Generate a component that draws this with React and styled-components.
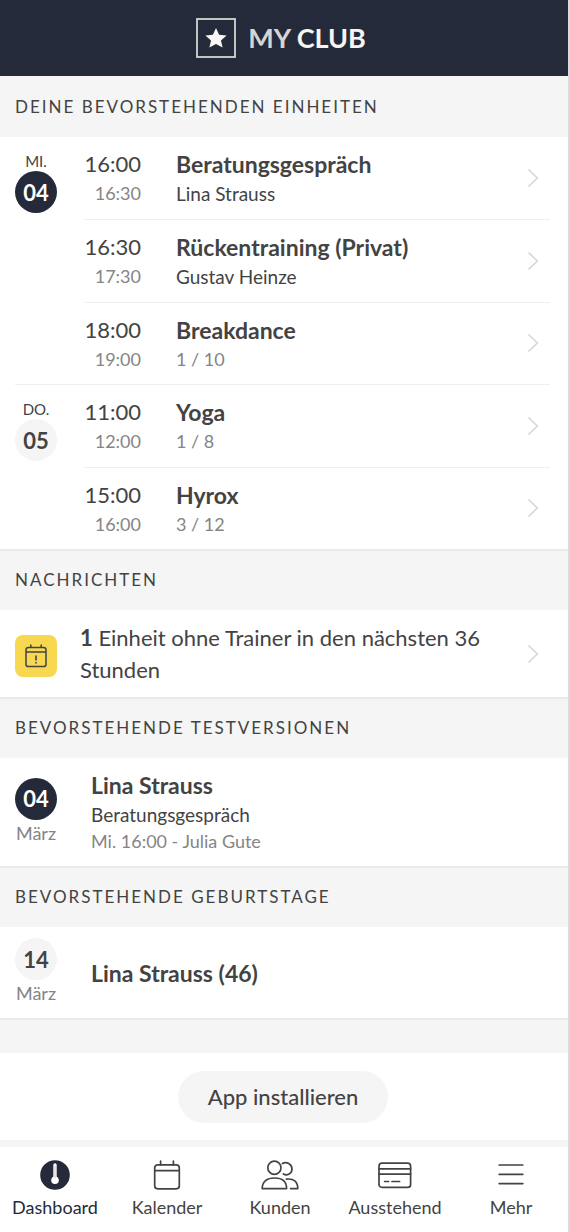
import React from 'react';
import styled, { createGlobalStyle } from 'styled-components';

const navy = '#242a3a';
const ink = '#434343';
const muted = '#858585';
const soft = '#f5f5f5';
const line = '#efefef';
const edge = '#e9e9e9';

const days = [
  {
    day: 'MI.',
    date: '04',
    today: true,
    units: [
      { start: '16:00', end: '16:30', title: 'Beratungsgespräch', person: 'Lina Strauss' },
      { start: '16:30', end: '17:30', title: 'Rückentraining (Privat)', person: 'Gustav Heinze' },
      { start: '18:00', end: '19:00', title: 'Breakdance', places: '1 / 10' },
    ],
  },
  {
    day: 'DO.',
    date: '05',
    units: [
      { start: '11:00', end: '12:00', title: 'Yoga', places: '1 / 8' },
      { start: '15:00', end: '16:00', title: 'Hyrox', places: '3 / 12' },
    ],
  },
];

const Chevron = () => (
  <ChevronIcon viewBox="0 0 12 20" aria-hidden="true">
    <path d="M1.5 1.5 L10.3 10 L1.5 18.5" />
  </ChevronIcon>
);

const DashboardIcon = () => (
  <NavIcon width="30" height="30" viewBox="0 0 30 30" aria-hidden="true">
    <circle cx="15" cy="15" r="14.8" fill={navy} stroke="none" />
    <path d="M15 5 V20" stroke="#fff" strokeWidth="3.4" />
    <circle cx="15" cy="20.2" r="3.8" fill="#fff" stroke="none" />
    <path d="M15 6 V18" stroke="#c9cbd0" strokeWidth="1" />
  </NavIcon>
);

const CalendarIcon = () => (
  <NavIcon width="28" height="30" viewBox="0 0 28 30" aria-hidden="true">
    <rect x="1.7" y="4.8" width="24.6" height="24" rx="3" />
    <path d="M1.7 10.6 H26.3 M7.6 1 V4.8 M20.4 1 V4.8" />
  </NavIcon>
);

const PeopleIcon = () => (
  <NavIcon width="38" height="30" viewBox="0 0 38 30" aria-hidden="true">
    <circle cx="13.4" cy="7.8" r="6.6" />
    <path d="M1.2 28.6 C1.2 21.5 6 18 13.4 18 C20.8 18 25.6 21.5 25.6 28.6 Z" />
    <path d="M21.4 3.6 C25.5 1.2 31 4 31 9 C31 13.6 26 16.2 22.4 14" />
    <path d="M25.4 19.2 C32.5 18 36.8 22 36.8 28.6 H29.6" />
  </NavIcon>
);

const CardIcon = () => (
  <NavIcon width="34" height="30" viewBox="0 0 34 30" aria-hidden="true">
    <rect x="1" y="3.2" width="31.6" height="24.2" rx="3" />
    <path d="M1 8.9 H32.6 M1 14.2 H32.6 M6.6 21.5 H10.6 M14 21.5 H21.6" />
  </NavIcon>
);

const MenuIcon = () => (
  <NavIcon width="26" height="30" viewBox="0 0 26 30" aria-hidden="true">
    <path d="M1.2 5 H24.8 M1.2 14.3 H24.8 M1.2 23.6 H24.8" />
  </NavIcon>
);

const navItems = [
  { label: 'Dashboard', icon: <DashboardIcon />, active: true },
  { label: 'Kalender', icon: <CalendarIcon /> },
  { label: 'Kunden', icon: <PeopleIcon /> },
  { label: 'Ausstehend', icon: <CardIcon /> },
  { label: 'Mehr', icon: <MenuIcon /> },
];

const App = () => {
  return (
    <>
      <GlobalStyle />
      <Page>
        <Header>
          <LogoIcon viewBox="0 0 40 40" aria-hidden="true">
            <rect x="1" y="1" width="38" height="38" fill="none" stroke="#d5d5d0" strokeWidth="1.8" />
            <path
              d="M20 10 L23.1 16.8 L30.6 17.5 L25 22.5 L26.6 29.6 L20 25.9 L13.4 29.6 L15 22.5 L9.4 17.5 L16.9 16.8 Z"
              fill="#f7f7f5"
            />
          </LogoIcon>
          <LogoText>
            <span>MY</span> CLUB
          </LogoText>
        </Header>

        <main>
          <SectionTitle>Deine bevorstehenden Einheiten</SectionTitle>
          {days.map((group) => (
            <DayGroup key={group.date}>
              <DayColumn>
                <DayName>{group.day}</DayName>
                <DateCircle $active={group.today}>{group.date}</DateCircle>
              </DayColumn>
              <UnitList>
                {group.units.map((unit) => (
                  <UnitRow key={unit.start} href="#einheit">
                    <Times>
                      <StartTime>{unit.start}</StartTime>
                      <EndTime>{unit.end}</EndTime>
                    </Times>
                    <UnitInfo>
                      <Title>{unit.title}</Title>
                      <SubText $muted={!unit.person}>{unit.person || unit.places}</SubText>
                    </UnitInfo>
                    <Chevron />
                  </UnitRow>
                ))}
              </UnitList>
            </DayGroup>
          ))}

          <SectionTitle>Nachrichten</SectionTitle>
          <MessageRow href="#nachrichten">
            <MessageBadge>
              <svg width="22" height="24" viewBox="0 0 22 24" fill="none" stroke={ink} strokeWidth="1.5" aria-hidden="true">
                <rect x="1" y="3.6" width="20" height="19" rx="2.4" />
                <path d="M1 8 H21 M5.8 0.6 V3.6 M16.2 0.6 V3.6" />
                <path d="M11 11.4 V16.4 M11 18 V19.6" strokeWidth="1.6" />
              </svg>
            </MessageBadge>
            <MessageText>
              <b>1</b> Einheit ohne Trainer in den nächsten 36 Stunden
            </MessageText>
            <Chevron />
          </MessageRow>

          <SectionTitle>Bevorstehende Testversionen</SectionTitle>
          <PersonRow $height={108}>
            <DateColumn>
              <DateCircle $active>04</DateCircle>
              <Month>März</Month>
            </DateColumn>
            <div>
              <Title>Lina Strauss</Title>
              <SubText>Beratungsgespräch</SubText>
              <SubText $muted>Mi. 16:00 - Julia Gute</SubText>
            </div>
          </PersonRow>

          <SectionTitle>Bevorstehende Geburtstage</SectionTitle>
          <PersonRow $height={91}>
            <DateColumn>
              <DateCircle>14</DateCircle>
              <Month>März</Month>
            </DateColumn>
            <Title>Lina Strauss (46)</Title>
          </PersonRow>

          <Gap />
          <InstallBar>
            <InstallButton type="button">App installieren</InstallButton>
          </InstallBar>
        </main>

        <Nav>
          {navItems.map((item) => (
            <NavLink key={item.label} href={`#${item.label.toLowerCase()}`} $active={item.active}>
              {item.icon}
              {item.label}
            </NavLink>
          ))}
        </Nav>
      </Page>
    </>
  );
};

const GlobalStyle = createGlobalStyle`
  * {
    box-sizing: border-box;
  }

  body {
    margin: 0;
    background: #fff;
    color: ${ink};
    font-family: Lato, 'Noto Sans', sans-serif;
    font-size: 18px;
  }

  a {
    color: inherit;
    text-decoration: none;
  }
`;

const Page = styled.div`
  border-right: 2px solid #dcdcdc;
`;

const Header = styled.header`
  display: flex;
  align-items: center;
  justify-content: center;
  gap: 12px;
  height: 76px;
  padding-right: 6px;
  background: ${navy};
`;

const LogoIcon = styled.svg`
  width: 40px;
  height: 40px;
`;

const LogoText = styled.span`
  color: #f5f5f3;
  font-size: 27px;
  font-weight: 700;
  line-height: 32px;

  span {
    color: #d5d5d3;
  }
`;

const SectionTitle = styled.h2`
  height: 61px;
  margin: 0;
  padding: 0 15px;
  border-top: 2px solid ${edge};
  background: ${soft};
  font-size: 17px;
  font-weight: 400;
  letter-spacing: 2px;
  line-height: 58px;
  text-transform: uppercase;

  &:first-child {
    border-top-color: ${soft};
  }
`;

const DayGroup = styled.section`
  display: flex;
  margin: 0 18px 0 15px;
  border-bottom: 1px solid ${line};

  &:last-of-type {
    border-bottom: 0;
  }
`;

const DayColumn = styled.div`
  display: flex;
  flex-direction: column;
  align-items: center;
  width: 42px;
  margin-right: 28px;
  padding-top: 14px;
`;

const DayName = styled.span`
  font-size: 15px;
  line-height: 20px;
`;

const DateCircle = styled.span`
  display: flex;
  align-items: center;
  justify-content: center;
  width: 42px;
  height: 42px;
  border-radius: 50%;
  background: ${({ $active }) => ($active ? navy : soft)};
  color: ${({ $active }) => ($active ? '#fff' : ink)};
  font-size: 22px;
  font-weight: 700;
`;

const UnitList = styled.div`
  flex: 1;
`;

const UnitRow = styled.a`
  display: flex;
  height: 83px;
  padding: 11px 11px 12px 0;
  border-bottom: 1px solid ${line};

  &:last-child {
    height: 81px;
    border-bottom: 0;
  }
`;

const Times = styled.div`
  display: flex;
  flex-direction: column;
  align-items: flex-end;
  width: 56px;
  margin-right: 35px;
`;

const StartTime = styled.span`
  font-size: 22px;
  line-height: 32px;
`;

const EndTime = styled.span`
  color: ${muted};
  font-size: 18px;
  line-height: 27px;
`;

const UnitInfo = styled.div`
  flex: 1;
`;

const Title = styled.div`
  font-size: 23px;
  font-weight: 700;
  line-height: 32px;
`;

const SubText = styled.div`
  color: ${({ $muted }) => ($muted ? muted : ink)};
  font-size: ${({ $muted }) => ($muted ? 18 : 19)}px;
  line-height: 27px;
`;

const ChevronIcon = styled.svg`
  flex: none;
  align-self: center;
  width: 12px;
  height: 20px;
  fill: none;
  stroke: #d6d6d6;
  stroke-width: 1.6;
`;

const MessageRow = styled.a`
  display: flex;
  align-items: center;
  min-height: 87px;
  padding: 12px 29px 11px 15px;
`;

const MessageBadge = styled.span`
  display: flex;
  align-items: center;
  justify-content: center;
  width: 42px;
  height: 42px;
  margin: 4px 23px 0 0;
  border-radius: 8px;
  background: #f7d850;
`;

const MessageText = styled.p`
  flex: 1;
  margin: 0;
  padding-right: 40px;
  font-size: 22px;
  line-height: 32px;
`;

const PersonRow = styled.div`
  display: flex;
  align-items: center;
  gap: 34px;
  min-height: ${({ $height }) => $height}px;
  padding: 0 15px;
`;

const DateColumn = styled.div`
  display: flex;
  flex-direction: column;
  align-items: center;
  width: 42px;
`;

const Month = styled.span`
  color: ${muted};
  font-size: 18px;
  line-height: 27px;
`;

const Gap = styled.div`
  height: 35px;
  border-top: 2px solid ${edge};
  background: ${soft};
`;

const InstallBar = styled.div`
  display: flex;
  justify-content: center;
  padding: 18px 2px 17px 0;
  border-bottom: 7px solid ${soft};
`;

const InstallButton = styled.button`
  height: 52px;
  padding: 0 30px 2px;
  border: 0;
  border-radius: 26px;
  background: ${soft};
  color: ${ink};
  font-family: inherit;
  font-size: 22px;
  font-weight: 500;
`;

const Nav = styled.nav`
  display: grid;
  grid-template-columns: 110fr 114fr 112fr 118fr 114fr;
  height: 85px;
  padding-top: 13px;
`;

const NavLink = styled.a`
  display: flex;
  flex-direction: column;
  align-items: center;
  gap: 4px;
  color: ${({ $active }) => ($active ? navy : ink)};
  font-size: 18px;
  line-height: 27px;
`;

const NavIcon = styled.svg`
  fill: none;
  stroke: ${ink};
  stroke-width: 1.7;
  stroke-linecap: round;
  stroke-linejoin: round;
`;

export default App;
